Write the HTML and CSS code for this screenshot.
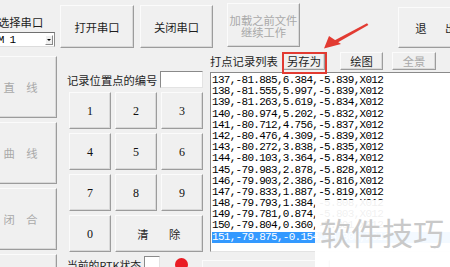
FILE: index.html
```html
<!DOCTYPE html>
<html lang="zh-CN">
<head>
  <meta charset="UTF-8" />
  <title>打点记录</title>
  <link rel="stylesheet" href="styles.css">
</head>
<body>
  <div class="form">
    <div class="col col-left">
      <div class="port-label">选择串口</div>
      <div class="combo">
        <span class="combo-text">COM 1</span>
        <span class="combo-btn"><span class="caret"></span></span>
      </div>
      <div class="side-buttons">
        <button class="btn btn-side" disabled>直　线</button>
        <button class="btn btn-side" disabled>曲　线</button>
        <button class="btn btn-side" disabled>闭　合</button>
        <button class="btn btn-side"></button>
      </div>
    </div>

    <div class="col col-mid">
      <div class="port-buttons">
        <button class="btn btn-port open">打开串口</button>
        <button class="btn btn-port">关闭串口</button>
      </div>
      <div class="record-row">
        <span class="record-label">记录位置点的编号</span>
        <span class="textbox"></span>
      </div>
      <div class="numpad">
        <button class="btn key">1</button>
        <button class="btn key">2</button>
        <button class="btn key">3</button>
        <button class="btn key">4</button>
        <button class="btn key">5</button>
        <button class="btn key">6</button>
        <button class="btn key">7</button>
        <button class="btn key">8</button>
        <button class="btn key">9</button>
        <button class="btn key">0</button>
        <button class="btn key-clear">清　除</button>
      </div>
      <div class="status-row">
        <span class="status-label">当前的RTK状态</span>
        <span class="textbox small"></span>
        <span class="led"></span>
      </div>
    </div>

    <div class="col col-right">
      <div class="top-row">
        <button class="btn btn-load" disabled>加载之前文件<br>继续工作</button>
        <button class="btn btn-exit">退　出</button>
      </div>
      <div class="list-head">
        <span class="list-title">打点记录列表</span>
        <button class="btn btn-small save">另存为</button>
        <button class="btn btn-small draw">绘图</button>
        <button class="btn btn-small full" disabled>全景</button>
      </div>
      <ul class="records">
        <li>137,-81.885,6.384,-5.839,X012</li>
        <li>138,-81.555,5.997,-5.839,X012</li>
        <li>139,-81.263,5.619,-5.834,X012</li>
        <li>140,-80.974,5.202,-5.832,X012</li>
        <li>141,-80.712,4.756,-5.837,X012</li>
        <li>142,-80.476,4.309,-5.839,X012</li>
        <li>143,-80.272,3.838,-5.835,X012</li>
        <li>144,-80.103,3.364,-5.834,X012</li>
        <li>145,-79.983,2.878,-5.828,X012</li>
        <li>146,-79.903,2.386,-5.816,X012</li>
        <li>147,-79.833,1.887,-5.819,X012</li>
        <li>148,-79.793,1.384,-5.808,X012</li>
        <li>149,-79.781,0.874,-5.803,X012</li>
        <li>150,-79.804,0.360,-5.801,X012</li>
        <li class="selected">151,-79.875,-0.154,-5.806,X012</li>
      </ul>
      <button class="btn btn-bottom"></button>
    </div>
  </div>

  <!-- annotation drawn over the screenshot -->
  <div class="callout-box"></div>
  <svg class="callout-arrow" width="52" height="32" viewBox="0 0 52 32">
    <polygon points="47,3.2 48.4,5 15.5,23.8 13.4,21" fill="#e23b32"/>
    <polygon points="4,28.5 9,16 21,24" fill="#e23b32"/>
  </svg>

  <div class="watermark">软件技巧</div>
</body>
</html>
```

FILE: styles.css
```css
body {
  margin: 0;
  width: 450px;
  height: 267px;
  overflow: hidden;
  position: relative;
  background: #f0f0f0;
  font-family: "Noto Sans CJK SC", sans-serif;
  font-size: 11.3px;
  line-height: 12px;
  color: #1e1e1e;
}

.form {
  display: flex;
  margin-left: -16px;
  height: 267px;
  overflow: hidden;
}

.col {
  display: flex;
  flex-direction: column;
  flex-shrink: 0;
}

.col > * {
  flex-shrink: 0;
}

.col-left {
  width: 73px;
}

.col-mid {
  width: 150px;
  margin-left: 3px;
}

.col-right {
  width: 260px;
}

/* classic windows buttons */
.btn {
  box-sizing: border-box;
  margin: 0;
  padding: 0;
  font: inherit;
  color: inherit;
  background: #f0f0f0;
  border: 1px solid;
  border-color: #fbfbfb #9c9c9c #9c9c9c #fbfbfb;
  box-shadow: inset -1px -1px #d9d9d9;
  display: flex;
  align-items: center;
  justify-content: center;
  flex-shrink: 0;
}

.btn:disabled {
  color: #a9a9a9;
}

/* left column */
.port-label {
  padding: 16px 0 0 14px;
  white-space: nowrap;
}

.combo {
  box-sizing: border-box;
  display: flex;
  align-items: center;
  width: 71px;
  height: 15px;
  margin-top: 4px;
  background: #fff;
  border: 1px solid #9a9a9a;
  border-color: #707070 #8c8c8c #dcdcdc #707070;
}

.combo-text {
  padding-left: 1px;
  font-family: "Liberation Mono", monospace;
  font-size: 11px;
  letter-spacing: -0.7px;
  color: #000;
}

.combo-btn {
  box-sizing: border-box;
  margin: 0 1px 0 auto;
  width: 8px;
  height: 10px;
  display: flex;
  align-items: center;
  justify-content: center;
  background: #f0f0f0;
  border: 1px solid;
  border-color: #fff #8a8a8a #8a8a8a #fff;
}

.caret {
  width: 0;
  height: 0;
  border-left: 2px solid transparent;
  border-right: 2px solid transparent;
  border-top: 2px solid #000;
}

.side-buttons {
  display: flex;
  flex-direction: column;
  gap: 4px;
  margin-top: 9px;
}

.btn-side {
  width: 73px;
  height: 62px;
}

/* middle column */
.port-buttons {
  display: flex;
  gap: 6px;
  padding-top: 5px;
}

.btn-port {
  width: 73px;
  height: 43px;
}

.btn-port.open {
  width: 74px;
}

.record-row {
  display: flex;
  align-items: center;
  height: 17px;
  margin-top: 23px;
  padding-left: 7px;
}

.record-label {
  width: 90px;
  white-space: nowrap;
}

.textbox {
  box-sizing: border-box;
  width: 43px;
  height: 17px;
  margin-left: 3px;
  background: #fff;
  border: 1px solid;
  border-color: #8a8a8a #e3e3e3 #e3e3e3 #8a8a8a;
}

.numpad {
  display: grid;
  grid-template-columns: repeat(3, 42px);
  grid-auto-rows: 37px;
  gap: 4px;
  margin-top: 4px;
  padding-left: 9px;
}

.key {
  font-family: "Liberation Serif", serif;
  font-size: 12px;
  color: #111;
}

.key-clear {
  grid-column: span 2;
  letter-spacing: 4.5px;
  padding-left: 4px;
}

.status-row {
  display: flex;
  align-items: flex-start;
  margin-top: 4px;
  padding-left: 7px;
}

.status-label {
  width: 73px;
  padding-top: 3px;
  white-space: nowrap;
  font-size: 10.8px;
}

.textbox.small {
  width: 16px;
  height: 16px;
  margin-left: 4px;
}

.led {
  width: 13px;
  height: 13px;
  margin: 2px 0 0 15px;
  border-radius: 50%;
  background: #ea1c24;
}

/* right column */
.top-row {
  display: flex;
  align-items: flex-start;
  height: 52px;
}

.btn-load {
  width: 73px;
  height: 44px;
  margin: 3px 0 0 17px;
  padding-top: 3px;
  line-height: 11.5px;
  text-align: center;
}

.btn-exit {
  width: 76px;
  height: 41px;
  margin: 7px 0 0 98px;
  letter-spacing: 3.5px;
  padding-left: 3px;
}

.list-head {
  display: flex;
  align-items: center;
  height: 18px;
}

.list-title {
  width: 68px;
  white-space: nowrap;
}

.btn-small {
  height: 18px;
}

.save {
  width: 42px;
  margin-left: 5px;
}

.draw {
  width: 43px;
  margin-left: 15px;
}

.full {
  width: 44px;
  margin-left: 9px;
}

.records {
  box-sizing: border-box;
  list-style: none;
  margin: 2px 0 0;
  padding: 2px 0 0 1px;
  width: 260px;
  height: 180px;
  background: #fff;
  border: 1px solid;
  border-color: #8a8a8a #e3e3e3 #e3e3e3 #8a8a8a;
  overflow: hidden;
  font-family: "Liberation Mono", monospace;
  font-size: 11px;
  letter-spacing: -0.7px;
  color: #000;
}

.records li {
  height: 11.2px;
  line-height: 11.2px;
  white-space: pre;
}

.records li.selected {
  background: #3399ff;
  color: #fff;
}

.btn-bottom {
  width: 128px;
  height: 30px;
  margin: 8px 0 0 -8px;
}

/* overlays */
.callout-box {
  position: absolute;
  left: 282px;
  top: 52px;
  width: 45px;
  height: 22px;
  box-sizing: border-box;
  border: 2px solid #e23b32;
}

.callout-arrow {
  position: absolute;
  left: 320px;
  top: 20px;
}

.watermark {
  position: absolute;
  left: 315px;
  top: 200px;
  width: 135px;
  height: 67px;
  box-sizing: border-box;
  padding: 16px 0 0 5px;
  background: rgba(255, 255, 255, 0.94);
  font-size: 31px;
  line-height: 31px;
  color: #c9c9c9;
  white-space: nowrap;
}
```
